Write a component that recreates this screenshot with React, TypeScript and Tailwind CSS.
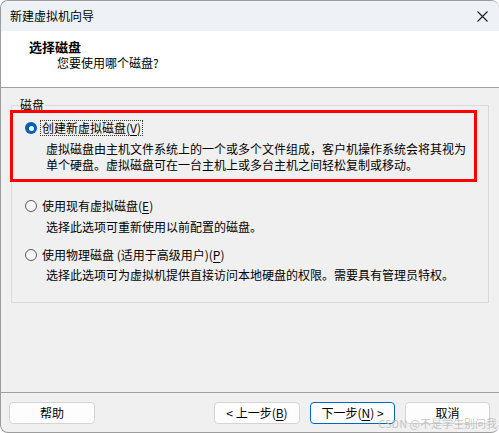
import React from "react";

const FONT = { fontFamily: '"Noto Sans CJK SC", "Noto Sans", sans-serif' };

function Radio({ checked }: { checked?: boolean }) {
  if (checked) {
    return (
      <span className="flex h-[12px] w-[12px] flex-none items-center justify-center rounded-full bg-[#005fb8]">
        <span className="h-[5px] w-[5px] rounded-full bg-white" />
      </span>
    );
  }
  return <span className="h-[12px] w-[12px] flex-none rounded-full border border-[#5a5a5a] bg-[#f7f7f7]" />;
}

function Btn({ children, w, primary }: { children: React.ReactNode; w: string; primary?: boolean }) {
  return (
    <button
      className={[
        "flex h-[22px] items-center justify-center rounded-[4px] bg-[#fdfdfd] text-[12px] leading-[16px] text-black",
        w,
        primary ? "border border-[#0067c0]" : "border border-[#d4d4d4]",
      ].join(" ")}
    >
      {children}
    </button>
  );
}

export default function App() {
  return (
    <div
      style={FONT}
      className="relative flex h-[433px] w-[499px] flex-col overflow-hidden rounded-[8px] border border-r-0 border-[#9c9c9c] bg-[#f0f0f0] text-black"
    >
      {/* Title bar */}
      <div className="flex h-[30px] flex-none items-center justify-between bg-[#eef2f7] pl-[9px] pr-[11px]">
        <span className="text-[12px] leading-[16px]">新建虚拟机向导</span>
        <svg width="11" height="11" viewBox="0 0 11 11">
          <path d="M0.5 0.5 L10.5 10.5 M10.5 0.5 L0.5 10.5" stroke="#1a1a1a" strokeWidth="1.1" />
        </svg>
      </div>

      {/* Header */}
      <div className="h-[57px] flex-none border-b border-[#a0a0a0] bg-white pl-[28px] pt-[8px]">
        <div className="text-[13px] font-bold leading-[16px]">选择磁盘</div>
        <div className="pl-[28px] text-[12px] leading-[16px]">您要使用哪个磁盘?</div>
      </div>

      {/* Body */}
      <div className="flex-1 pl-[10px] pt-[17px]">
        <div className="relative h-[198px] w-[478px] border border-[#dadada]">
          <span className="absolute -top-[9px] left-[7px] bg-[#f0f0f0] px-[1px] text-[12px] leading-[16px]">磁盘</span>

          <div className="flex flex-col pl-[13px] pt-[14px] text-[12px]">
            <div className="flex h-[16px] items-center">
              <Radio checked />
              <span className="ml-[3px] border border-dotted border-[#333] px-[1px] leading-[14px]">
                创建新虚拟磁盘(<u className="underline-offset-2">V</u>)
              </span>
            </div>
            <div className="ml-[21px] mt-[5px] leading-[16px]">
              <div>虚拟磁盘由主机文件系统上的一个或多个文件组成，客户机操作系统会将其视为</div>
              <div>单个硬盘。虚拟磁盘可在一台主机上或多台主机之间轻松复制或移动。</div>
            </div>

            <div className="mt-[25px] flex h-[16px] items-center">
              <Radio />
              <span className="ml-[4px] px-[1px] leading-[16px]">
                使用现有虚拟磁盘(<u className="underline-offset-2">E</u>)
              </span>
            </div>
            <div className="ml-[21px] mt-[5px] leading-[16px]">选择此选项可重新使用以前配置的磁盘。</div>

            <div className="mt-[12px] flex h-[16px] items-center">
              <Radio />
              <span className="ml-[4px] px-[1px] leading-[16px]">
                使用物理磁盘 (适用于高级用户)(<u className="underline-offset-2">P</u>)
              </span>
            </div>
            <div className="ml-[21px] mt-[4px] leading-[16px]">
              选择此选项可为虚拟机提供直接访问本地硬盘的权限。需要具有管理员特权。
            </div>
          </div>
        </div>
      </div>

      {/* Footer */}
      <div className="flex h-[40px] flex-none items-start border-t border-[#a0a0a0] pl-[8px] pt-[9px]">
        <Btn w="w-[86px]">帮助</Btn>
        <div className="ml-[119px] flex gap-[10px]">
          <Btn w="w-[86px]">
            &lt; 上一步(<u className="underline-offset-2">B</u>)
          </Btn>
          <Btn w="w-[85px]" primary>
            下一步(<u className="underline-offset-2">N</u>) &gt;
          </Btn>
          <Btn w="w-[85px]">取消</Btn>
        </div>
      </div>

      {/* Annotation box */}
      <div className="pointer-events-none absolute left-[9px] top-[109px] h-[72px] w-[467px] border-[3px] border-[#ff0000]" />

      {/* Watermark */}
      <span className="pointer-events-none absolute bottom-[2px] right-[2px] text-[11px] leading-[13px] text-[#b8b8b8]/80">
        CSDN @不是学生别问我
      </span>
    </div>
  );
}
